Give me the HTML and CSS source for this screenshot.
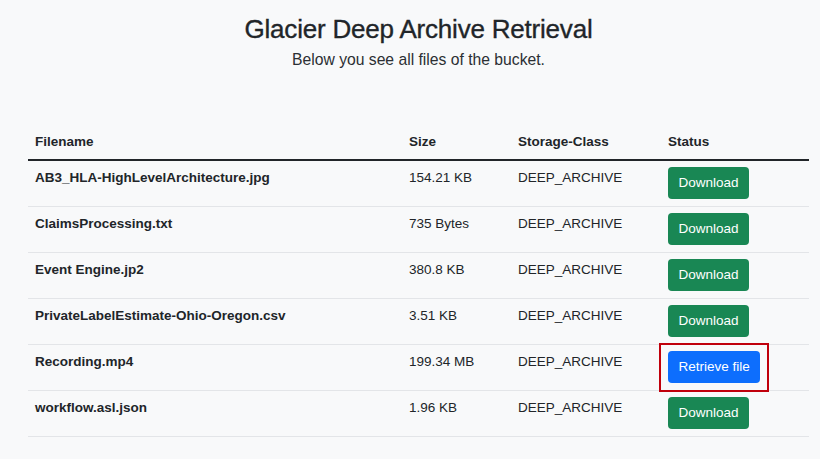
FILE: index.html
```html
<!DOCTYPE html>
<html lang="en">
<head>
<meta charset="utf-8">
<title>Glacier Deep Archive Retrieval</title>
<link rel="stylesheet" href="styles.css">
</head>
<body>
<main class="page">
  <header class="intro">
    <h1 class="title">Glacier Deep Archive Retrieval</h1>
    <p class="lead">Below you see all files of the bucket.</p>
  </header>
  <table class="files">
    <colgroup>
      <col class="c-name"><col class="c-size"><col class="c-class"><col class="c-status">
    </colgroup>
    <thead>
      <tr><th>Filename</th><th>Size</th><th>Storage-Class</th><th>Status</th></tr>
    </thead>
    <tbody>
      <tr><td class="name">AB3_HLA-HighLevelArchitecture.jpg</td><td>154.21 KB</td><td>DEEP_ARCHIVE</td><td class="act"><button class="btn btn-green">Download</button></td></tr>
      <tr><td class="name">ClaimsProcessing.txt</td><td>735 Bytes</td><td>DEEP_ARCHIVE</td><td class="act"><button class="btn btn-green">Download</button></td></tr>
      <tr><td class="name">Event Engine.jp2</td><td>380.8 KB</td><td>DEEP_ARCHIVE</td><td class="act"><button class="btn btn-green">Download</button></td></tr>
      <tr><td class="name">PrivateLabelEstimate-Ohio-Oregon.csv</td><td>3.51 KB</td><td>DEEP_ARCHIVE</td><td class="act"><button class="btn btn-green">Download</button></td></tr>
      <tr><td class="name">Recording.mp4</td><td>199.34 MB</td><td>DEEP_ARCHIVE</td><td class="act"><span class="highlight"><button class="btn btn-blue">Retrieve file</button></span></td></tr>
      <tr><td class="name">workflow.asl.json</td><td>1.96 KB</td><td>DEEP_ARCHIVE</td><td class="act"><button class="btn btn-green">Download</button></td></tr>
    </tbody>
  </table>
</main>
</body>
</html>
```
FILE: styles.css
```css
html, body {
  margin: 0;
  padding: 0;
  background: #f8f9fa;
}
body {
  font-family: "Liberation Sans", Arial, sans-serif;
  color: #212529;
}
.page {
  width: 781px;
  margin: 0 0 0 28px;
  padding-top: 14px;
}
.intro {
  text-align: center;
}
.title {
  margin: 0;
  font-size: 26px;
  font-weight: 500;
  line-height: 31px;
  letter-spacing: -0.2px;
  -webkit-text-stroke: 0.35px #212529;
}
.lead {
  margin: 5px 0 0;
  font-size: 15.7px;
  line-height: 20px;
  color: #2b2f33;
}
.files {
  margin-top: 55px;
  width: 781px;
  border-collapse: collapse;
  table-layout: fixed;
  font-size: 13.5px;
}
.c-name { width: 374px; }
.c-size { width: 109px; }
.c-class { width: 150px; }
.c-status { width: 148px; }
.files th {
  text-align: left;
  font-weight: 700;
  padding: 7px 7px;
  line-height: 20px;
  border-bottom: 2px solid #212529;
}
.files td {
  padding: 7px 7px 6px;
  line-height: 20px;
  vertical-align: top;
  border-bottom: 1px solid #e3e5e8;
}
.files td.act {
  padding: 6px 7px 7px;
}
.files td.name {
  font-weight: 700;
}
.btn {
  display: inline-block;
  vertical-align: top;
  font-family: inherit;
  font-size: 13.5px;
  line-height: 20px;
  padding: 6px 10.5px;
  border: 0;
  border-radius: 4px;
  color: #fff;
  cursor: pointer;
}
.btn-green { background: #198754; }
.btn-blue { background: #0d6efd; }
.highlight {
  position: relative;
  display: inline-block;
  vertical-align: top;
}
.highlight::after {
  content: "";
  position: absolute;
  left: -9px;
  right: -9px;
  top: -8px;
  bottom: -9px;
  border: 2px solid #c0000c;
  pointer-events: none;
}
```
